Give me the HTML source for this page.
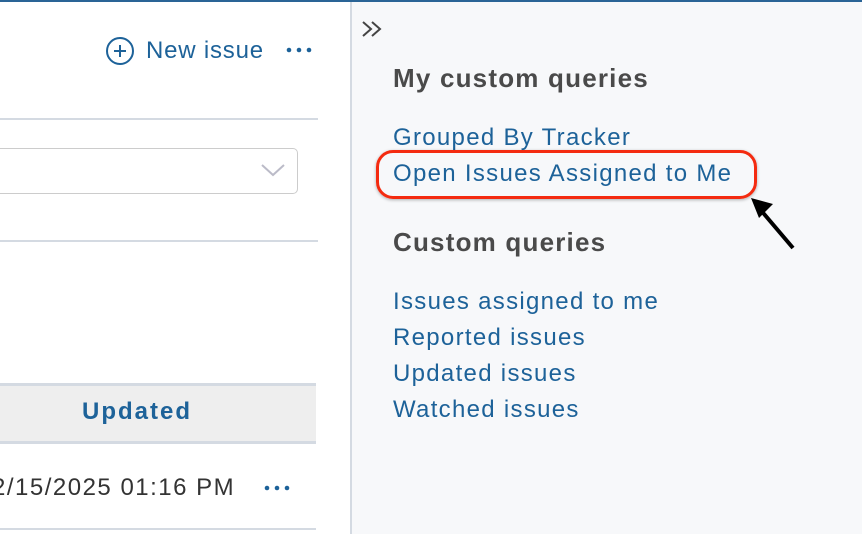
<!DOCTYPE html>
<html><head><meta charset="utf-8"><style>
*{margin:0;padding:0;box-sizing:border-box}
body{width:862px;height:534px;overflow:hidden;background:#fff;font-family:"Liberation Sans",sans-serif;position:relative}
.a{position:absolute;white-space:nowrap}
.l{color:#1d6299;font-size:24px;line-height:36px;left:393px;letter-spacing:1.3px}
.h{color:#4a4a4a;font-size:26px;font-weight:bold;left:393px;line-height:36px;letter-spacing:1.2px}
</style></head><body>
<div class="a" style="left:0;top:0;width:862px;height:2px;background:#2a6496"></div>
<div class="a" style="left:350px;top:2px;width:512px;height:532px;background:#f7f8fa;border-left:2px solid #d4dae2"></div>
<svg class="a" style="left:105px;top:36px" width="30" height="30"><circle cx="15" cy="15" r="13" fill="none" stroke="#1d6299" stroke-width="2"/><path d="M15 9v12M9 15h12" stroke="#1d6299" stroke-width="2"/></svg>
<div class="a" style="left:146px;top:33px;font-size:24px;color:#1d6299;line-height:36px;letter-spacing:0.8px">New issue</div>
<svg class="a" style="left:285px;top:45px" width="30" height="10"><circle cx="4" cy="5" r="2.3" fill="#1d6299"/><circle cx="14" cy="5" r="2.3" fill="#1d6299"/><circle cx="24" cy="5" r="2.3" fill="#1d6299"/></svg>
<div class="a" style="left:0;top:118px;width:318px;height:2px;background:#d4dae2"></div>
<div class="a" style="left:-10px;top:148px;width:308px;height:46px;border:1.5px solid #ccc;border-radius:5px"></div>
<svg class="a" style="left:260px;top:162px" width="26" height="16"><path d="M2 3l11 10 11-10" fill="none" stroke="#bbbbc8" stroke-width="2"/></svg>
<div class="a" style="left:0;top:240px;width:318px;height:2px;background:#d4dae2"></div>
<div class="a" style="left:0;top:383px;width:316px;height:61px;background:#eeeeee;border-top:3px solid #d4dae2;border-bottom:3px solid #d4dae2"></div>
<div class="a" style="left:82px;top:394px;font-size:24px;font-weight:bold;color:#1d6299;line-height:36px;letter-spacing:2px">Updated</div>
<div class="a" style="left:-8px;top:470px;font-size:24px;color:#333;line-height:36px;letter-spacing:1.5px">2/15/2025 01:16 PM</div>
<svg class="a" style="left:263px;top:483px" width="30" height="10"><circle cx="4" cy="5" r="2.3" fill="#1d6299"/><circle cx="14" cy="5" r="2.3" fill="#1d6299"/><circle cx="24" cy="5" r="2.3" fill="#1d6299"/></svg>
<div class="a" style="left:0;top:528px;width:316px;height:2px;background:#d4dae2"></div>
<svg class="a" style="left:361px;top:19px" width="24" height="20"><path d="M2 3l8 7-8 7M11 3l8 7-8 7" fill="none" stroke="#444" stroke-width="2"/></svg>
<div class="a h" style="top:60px">My custom queries</div>
<div class="a l" style="top:120px">Grouped By Tracker</div>
<div class="a l" style="top:156px">Open Issues Assigned to Me</div>
<div class="a h" style="top:224px">Custom queries</div>
<div class="a l" style="top:284px">Issues assigned to me</div>
<div class="a l" style="top:320px">Reported issues</div>
<div class="a l" style="top:356px">Updated issues</div>
<div class="a l" style="top:392px">Watched issues</div>
<div class="a" style="left:376px;top:150px;width:381px;height:49px;border:3px solid #f42b10;border-radius:17px;box-shadow:0 1px 3px rgba(0,0,0,.3)"></div>
<svg class="a" style="left:745px;top:192px" width="55" height="62"><path d="M48 56L14 16" stroke="#000" stroke-width="4"/><path d="M6 6l22 6-14 14z" fill="#000"/></svg>
</body></html>
